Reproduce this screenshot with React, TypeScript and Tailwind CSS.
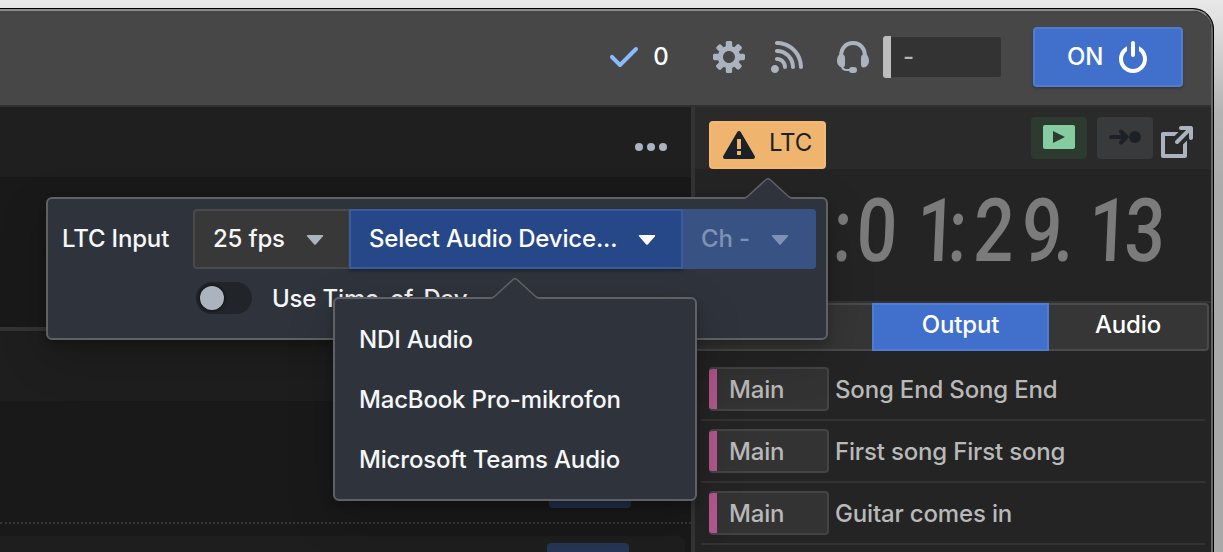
import type { ReactNode } from "react";

const ICONS = {
  tick: "M14 3c-.28 0-.53.11-.71.29L6 10.59l-3.29-3.3a1.003 1.003 0 00-1.42 1.42l4 4c.18.18.43.29.71.29s.53-.11.71-.29l8-8A1.003 1.003 0 0014 3z",
  cog: "M15.19 6.39h-1.85c-.11-.37-.27-.71-.45-1.04l1.36-1.36c.31-.31.31-.82 0-1.13l-1.13-1.13a.803.803 0 00-1.13 0l-1.36 1.36c-.33-.17-.67-.33-1.04-.44V.79c0-.44-.36-.8-.8-.8h-1.6c-.44 0-.8.36-.8.8v1.86c-.39.12-.75.28-1.1.47l-1.3-1.3c-.3-.3-.79-.3-1.09 0L1.82 2.91c-.3.3-.3.79 0 1.09l1.3 1.3c-.2.34-.36.7-.48 1.09H.79c-.44 0-.8.36-.8.8v1.6c0 .44.36.8.8.8h1.85c.11.37.27.71.45 1.04l-1.36 1.36c-.31.31-.31.82 0 1.13l1.13 1.13c.31.31.82.31 1.13 0l1.36-1.36c.33.18.67.33 1.04.44v1.86c0 .44.36.8.8.8h1.6c.44 0 .8-.36.8-.8v-1.86c.39-.12.75-.28 1.1-.47l1.3 1.3c.3.3.79.3 1.09 0l1.09-1.09c.3-.3.3-.79 0-1.09l-1.3-1.3c.19-.35.36-.71.48-1.1h1.85c.44 0 .8-.36.8-.8v-1.6a.816.816 0 00-.81-.79zm-7.2 4.6c-1.66 0-3-1.34-3-3s1.34-3 3-3 3 1.34 3 3-1.34 3-3 3z",
  feed: "M1.99 11.99c-1.1 0-2 .9-2 2s.9 2 2 2 2-.9 2-2-.89-2-2-2zm1-4c-.55 0-1 .45-1 1s.45 1 1 1c1.66 0 3 1.34 3 3 0 .55.45 1 1 1s1-.45 1-1c0-2.76-2.24-5-5-5zm0-4c-.55 0-1 .45-1 1s.45 1 1 1c3.87 0 7 3.13 7 7 0 .55.45 1 1 1s1-.45 1-1a9 9 0 00-9-9zm0-4c-.55 0-1 .45-1 1s.45 1 1 1c6.08 0 11 4.92 11 11 0 .55.45 1 1 1s1-.45 1-1c0-7.18-5.82-13-13-13z",
  power:
    "M8 8c.55 0 1-.45 1-1V1c0-.55-.45-1-1-1S7 .45 7 1v6c0 .55.45 1 1 1zm3-5.32v2.34c1.21.91 2 2.35 2 3.98 0 2.76-2.24 5-5 5s-5-2.24-5-5c0-1.63.79-3.06 2-3.98V2.68C2.64 3.81 1 6.21 1 9c0 3.87 3.13 7 7 7s7-3.13 7-7c0-2.79-1.64-5.19-4-6.32z",
  warning:
    "M15.84 13.5l.01-.01-7-12-.01.01c-.17-.3-.48-.5-.85-.5s-.67.2-.85.5l-.01-.01-7 12 .01.01c-.09.15-.15.31-.15.5 0 .55.45 1 1 1h14c.55 0 1-.45 1-1 0-.19-.06-.35-.15-.5zm-6.85-.51h-2v-2h2v2zm0-3h-2v-5h2v5z",
  share:
    "M10.99 13.99h-9v-9h4.76l2-2H.99c-.55 0-1 .45-1 1v11c0 .55.45 1 1 1h11c.55 0 1-.45 1-1V7.24l-2 2v4.75zm4-14h-5c-.55 0-1 .45-1 1s.45 1 1 1h2.59L7.29 7.28a1 1 0 00-.3.71 1.003 1.003 0 001.71.71l5.29-5.29V6c0 .55.45 1 1 1s1-.45 1-1V1c0-.56-.45-1.01-1-1.01z",
  video:
    "M15 2H1c-.55 0-1 .45-1 1v10c0 .55.45 1 1 1h14c.55 0 1-.45 1-1V3c0-.55-.45-1-1-1zM5 11V5l6 3-6 3z",
  caret: "M4.3 6h7.4c.4 0 .5.4.3.65L8.4 10.7c-.2.3-.6.3-.8 0L4 6.65C3.8 6.4 3.9 6 4.3 6z",
};

function Icon({ name, className }: { name: keyof typeof ICONS; className?: string }) {
  return (
    <svg viewBox="0 0 16 16" className={`size-8 shrink-0 ${className ?? ""}`} fill="currentColor" aria-hidden>
      <path fillRule="evenodd" d={ICONS[name]} />
    </svg>
  );
}

function Headset() {
  return (
    <svg viewBox="0 0 32 32" className="size-8 shrink-0" fill="none" stroke="currentColor" aria-hidden>
      <path d="M4 15.5C4 7 9 2 16 2s12 5 12 13.5" strokeWidth="4" />
      <path
        d="M4 13c2.600 0 4 1.500 4 4v6.500c0 2-1 3-2.500 3C2.500 26.500 0 23.500 0 20s1.500-7 4-7zM28 13c-2.600 0-4 1.500-4 4v6.500c0 2 1 3 2.500 3 3 0 5.500-3 5.500-6.500s-1.500-7-4-7z"
        fill="currentColor"
        stroke="none"
      />
      <path d="M5 25.500c.5 2.600 2 3.500 4.500 3.500H14" strokeWidth="2" />
      <rect x="12" y="26" width="8" height="6" rx="3" fill="currentColor" stroke="none" />
    </svg>
  );
}

function Popover({ className, arrow, children }: { className: string; arrow: string; children: ReactNode }) {
  return (
    <div
      className={`absolute rounded-[6px] border-2 border-[#5f6164] bg-[#2f343c] shadow-[0_4px_8px_rgba(0,0,0,0.2),0_16px_48px_rgba(0,0,0,0.2)] ${className}`}
    >
      <svg viewBox="0 0 50 22" className={`absolute -top-[21px] h-[22px] w-[50px] ${arrow}`} aria-hidden>
        <path d="M0 22L4 19L22 2Q25 -0.500 28 2L46 19L50 22Z" fill="#2f343c" />
        <path d="M0 20Q3 20 5 18L22.500 2Q25 -0.500 27.500 2L45 18Q47 20 50 20" fill="none" stroke="#5f6164" strokeWidth="1.500" />
      </svg>
      {children}
    </div>
  );
}

const CLOCK: { char: string; cell: string }[] = [
  { char: ":", cell: "ml-[2px] w-[14px]" },
  { char: "0", cell: "w-[53px]" },
  { char: "1", cell: "ml-[24px] w-[20px]" },
  { char: ":", cell: "w-[22px]" },
  { char: "2", cell: "w-[49px]" },
  { char: "9", cell: "w-[48px]" },
  { char: ".", cell: "-ml-[3px] w-[2px]" },
  { char: "1", cell: "ml-[27px] w-[33px]" },
  { char: "3", cell: "w-[40px]" },
];

const CUES = ["Song End Song End", "First song First song", "Guitar comes in"];
const DEVICES = ["NDI Audio", "MacBook Pro-mikrofon", "Microsoft Teams Audio"];

function Header() {
  return (
    <header className="flex h-[96px] shrink-0 items-start border-b-2 border-[#303030] bg-[#474747] text-[#abb3bf]">
      <div className="ml-[608px] flex h-[92px] items-center">
        <Icon name="tick" className="text-[#8abbff]" />
        <span className="ml-[13px] w-[16px] text-center text-white">0</span>
        <Icon name="cog" className="ml-[44px]" />
        <Icon name="feed" className="ml-[26px]" />
        <span className="ml-[34px] flex">
          <Headset />
        </span>
        <div className="ml-[14px] flex h-[42px] items-center">
          <div className="h-[42px] w-2 rounded-l-[3px] bg-[#bdbdbd]" />
          <div className="flex h-10 w-[110px] items-center rounded-r-[2px] bg-[#333] pl-[12px] text-[#b5b5b5]">-</div>
        </div>
        <button className="ml-[32px] flex h-[60px] w-[150px] items-center rounded-[4px] border-2 border-[#4f7dd2] bg-[#4070cc] pl-[32px] text-white shadow-[0_2px_3px_rgba(0,0,0,0.2)]">
          <span className="w-[36px]">ON</span>
          <Icon name="power" className="ml-[14px]" />
        </button>
      </div>
    </header>
  );
}

function LeftPane() {
  return (
    <section className="flex w-[691px] shrink-0 flex-col bg-[#191919]">
      <div className="flex h-[70px] shrink-0 items-center justify-end bg-[#1f1f1f] pr-[24px] pt-[10px]">
        <svg viewBox="0 0 32 8" className="h-2 w-8" fill="#abb3bf" aria-hidden>
          <circle cx="4" cy="4" r="4" />
          <circle cx="16" cy="4" r="4" />
          <circle cx="28" cy="4" r="4" />
        </svg>
      </div>
      <div className="h-[150px] shrink-0 border-b border-[#191919]" />
      <div className="h-[4px] shrink-0 bg-[#333]" />
      <div className="h-[70px] shrink-0 bg-[#1e1e1e]" />
      <div className="flex h-[123px] shrink-0 items-end justify-end border-b-2 border-dotted border-[#363636] pb-[14px] pr-[60px]">
        <div className="h-[36px] w-[82px] rounded-[4px] bg-[#22304c]" />
      </div>
      <div className="mr-[6px] mt-[12px] flex h-[60px] shrink-0 justify-end rounded-tr-[8px] bg-[#1e1e1e] pr-[56px] pt-[7px]">
        <div className="h-[36px] w-[82px] rounded-[4px] bg-[#263555]" />
      </div>
    </section>
  );
}

function RightPane() {
  return (
    <section className="flex min-w-0 grow flex-col bg-[#242424]">
      <div className="flex h-[62px] shrink-0 items-start bg-[#2a2a2a] pl-[14px] pt-[10px]">
        <div className="mt-[4px] flex h-[48px] w-[117px] items-center rounded-[4px] border-2 border-[#f6b877] bg-[#efb56e] pl-[12px] text-[#1c2127]">
          <Icon name="warning" />
          <span className="-mt-[4px] ml-[14px] font-normal">LTC</span>
        </div>
        <div className="ml-[205px] flex h-[42px] w-[56px] items-center justify-center rounded-[4px] bg-[#2c3a30] pb-[2px] text-[#85cca1]">
          <Icon name="video" />
        </div>
        <div className="ml-[10px] flex h-[42px] w-[56px] items-center justify-center rounded-[4px] bg-[#393a3c] pb-[2px]">
          <svg viewBox="0 0 32 16" className="h-4 w-8" fill="none" stroke="#1c2127" strokeWidth="4" strokeLinecap="round" strokeLinejoin="round" aria-hidden>
            <path d="M2 8H17M12 2.500L17.500 8L12 13.500" />
            <circle cx="26" cy="8" r="6" fill="#1c2127" stroke="none" />
          </svg>
        </div>
        <Icon name="share" className="ml-[8px] mt-[9px] text-[#abb3bf]" />
      </div>
      <div className="flex h-[132px] shrink-0 items-start pl-[139px] pt-[17px]">
        {CLOCK.map(({ char, cell }, i) => (
          <span key={i} className={`flex shrink-0 justify-center ${cell}`}>
            <span className="inline-block origin-center scale-x-[0.81] -skew-x-3 font-['Roboto',sans-serif] text-[88px] leading-[90px] font-medium text-[#7b7b7b]">
              {char}
            </span>
          </span>
        ))}
      </div>
      <div className="h-[2px] shrink-0 bg-[#333]" />
      <div className="mr-[2px] flex h-[48px] shrink-0 rounded-r-[4px] border-2 border-[#4a4a4a] bg-[#363636] font-medium text-white">
        <div className="w-[175px]" />
        <div className="-my-[2px] flex w-[177px] items-center justify-center border-2 border-[#4f7dd2] bg-[#4070cc] pb-[4px]">Output</div>
        <div className="flex grow items-center justify-center pb-[4px]">Audio</div>
      </div>
      <div className="ml-[6px] mr-[6px] mt-[8px] flex flex-col text-[#b9b9b9]">
        {CUES.map((cue) => (
          <div key={cue} className="flex h-[62px] shrink-0 items-center border-b-2 border-[#333] pl-[8px]">
            <div className="flex h-[44px] w-[120px] items-center overflow-hidden rounded-[4px] border-2 border-l-0 border-[#444] bg-[#333]">
              <div className="-my-[2px] h-[44px] w-[8px] bg-[#b3588d]" />
              <span className="ml-[12px] pt-[2px]">Main</span>
            </div>
            <span className="ml-[6px] whitespace-nowrap pt-[2px]">{cue}</span>
          </div>
        ))}
      </div>
    </section>
  );
}

export default function App() {
  return (
    <div className="relative h-[552px] w-[1223px] overflow-hidden bg-[linear-gradient(180deg,#e8e8e8_0px,#e0e0e0_20px,#b4b4b4_110px,#aaaaaa_200px,#a8a8a8_100%)] pt-[8px] font-['Inter','Liberation_Sans',sans-serif] text-[24px] leading-[30px] font-[450] tracking-[-0.17px]">
      <div className="h-[560px] w-[1214px] overflow-hidden rounded-tr-[21px] border-t border-r border-black bg-black">
        <div className="flex h-full flex-col overflow-hidden rounded-tr-[20px] border-t-2 border-r-2 border-t-[#8a8a8a] border-r-[#646464]">
          <Header />
          <main className="flex min-h-0 grow">
            <LeftPane />
            <div className="w-[4px] shrink-0 bg-[#333]" />
            <RightPane />
          </main>
        </div>
      </div>

      <Popover className="left-[46px] top-[197px] h-[143px] w-[782px]" arrow="left-[695px]">
        <div className="mt-[10px] flex h-[60px] items-center text-[#f6f7f9]">
          <span className="w-[145px] pl-[14px] whitespace-nowrap">LTC Input</span>
          <button className="flex h-[60px] w-[157px] items-center rounded-l-[4px] border-2 border-[#4a4a4a] bg-[#383838] pl-[18px]">
            <span className="w-[86px] text-left">25 fps</span>
            <Icon name="caret" className="text-[#abb3bf]" />
          </button>
          <button className="-ml-px flex h-[60px] w-[334px] items-center border-2 border-[#3b5c9c] bg-[#264888] pl-[18px] text-white shadow-[0_2px_3px_rgba(0,0,0,0.3)]">
            <span className="w-[262px] text-left whitespace-nowrap">Select Audio Device...</span>
            <Icon name="caret" />
          </button>
          <button className="flex h-[60px] w-[133px] items-center rounded-r-[4px] bg-[#395284] pl-[18px] text-[#7f92b6]">
            <span className="w-[63px] text-left whitespace-nowrap">Ch -</span>
            <Icon name="caret" />
          </button>
        </div>
        <div className="mt-[13px] flex items-center pl-[148px] text-[#f6f7f9]">
          <div className="flex h-[32px] w-[56px] items-center rounded-full bg-[#212429] pl-[4px]">
            <div className="size-6 rounded-full bg-[#abb3bf] shadow-[0_0_3px_1px_rgba(0,0,0,0.5)]" />
          </div>
          <span className="ml-[20px] whitespace-nowrap pt-[2px]">Use Time-of-Day</span>
        </div>
      </Popover>

      <Popover className="left-[333px] top-[297px] h-[204px] w-[364px]" arrow="left-[155px]">
        <ul className="pt-[11px] pl-[24px] text-[#f6f7f9]">
          {DEVICES.map((device) => (
            <li key={device} className="flex h-[60px] items-center whitespace-nowrap">
              {device}
            </li>
          ))}
        </ul>
      </Popover>
    </div>
  );
}
